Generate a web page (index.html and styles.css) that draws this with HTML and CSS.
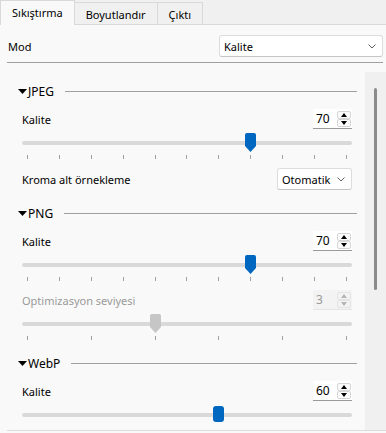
FILE: index.html
```html
<!DOCTYPE html>
<html lang="tr">
<head>
    <meta charset="UTF-8">
    <meta name="viewport" content="width=device-width, initial-scale=1.0">
    <title>Sıkıştırma</title>
    <link rel="stylesheet" href="styles.css">
</head>
<body>
    <div class="tabbar">
        <div class="tab active">Sıkıştırma</div>
        <div class="tab">Boyutlandır</div>
        <div class="tab">Çıktı</div>
    </div>

    <div class="page">
        <div class="mode-row">
            <span class="mode-label">Mod</span>
            <div class="combo combo-wide">
                <span>Kalite</span>
                <svg class="chevron" viewBox="0 0 8 5"><polyline points="0.5,0.5 4,4 7.5,0.5"/></svg>
            </div>
        </div>
        <div class="separator"></div>

        <div class="scroll">
            <div class="scroll-content">
                <!-- JPEG -->
                <section class="group">
                    <div class="group-head">
                        <svg class="caret" viewBox="0 0 9 5"><polygon points="0,0 9,0 4.5,5"/></svg>
                        <span>JPEG</span>
                        <div class="group-line"></div>
                    </div>
                    <div class="field">
                        <span>Kalite</span>
                        <div class="spin">
                            <span class="spin-value">70</span>
                            <div class="spin-buttons">
                                <div class="spin-btn"><svg viewBox="0 0 6 4"><polygon points="0,4 6,4 3,0"/></svg></div>
                                <div class="spin-btn"><svg viewBox="0 0 6 4"><polygon points="0,0 6,0 3,4"/></svg></div>
                            </div>
                        </div>
                    </div>
                    <div class="slider">
                        <div class="groove"></div>
                        <svg class="handle" style="left: calc((100% - 11px) * 0.7)" viewBox="0 0 11 19"><path d="M2 0H9A2 2 0 0 1 11 2V13L5.5 19L0 13V2A2 2 0 0 1 2 0Z"/></svg>
                        <div class="ticks"><i></i><i></i><i></i><i></i><i></i><i></i><i></i><i></i><i></i><i></i><i></i></div>
                    </div>
                    <div class="field field-combo">
                        <span>Kroma alt örnekleme</span>
                        <div class="combo combo-small">
                            <span>Otomatik</span>
                            <svg class="chevron" viewBox="0 0 8 5"><polyline points="0.5,0.5 4,4 7.5,0.5"/></svg>
                        </div>
                    </div>
                </section>

                <!-- PNG -->
                <section class="group">
                    <div class="group-head">
                        <svg class="caret" viewBox="0 0 9 5"><polygon points="0,0 9,0 4.5,5"/></svg>
                        <span>PNG</span>
                        <div class="group-line"></div>
                    </div>
                    <div class="field">
                        <span>Kalite</span>
                        <div class="spin">
                            <span class="spin-value">70</span>
                            <div class="spin-buttons">
                                <div class="spin-btn"><svg viewBox="0 0 6 4"><polygon points="0,4 6,4 3,0"/></svg></div>
                                <div class="spin-btn"><svg viewBox="0 0 6 4"><polygon points="0,0 6,0 3,4"/></svg></div>
                            </div>
                        </div>
                    </div>
                    <div class="slider">
                        <div class="groove"></div>
                        <svg class="handle" style="left: calc((100% - 11px) * 0.7)" viewBox="0 0 11 19"><path d="M2 0H9A2 2 0 0 1 11 2V13L5.5 19L0 13V2A2 2 0 0 1 2 0Z"/></svg>
                        <div class="ticks"><i></i><i></i><i></i><i></i><i></i><i></i><i></i><i></i><i></i><i></i><i></i></div>
                    </div>
                    <div class="field disabled">
                        <span>Optimizasyon seviyesi</span>
                        <div class="spin">
                            <span class="spin-value">3</span>
                            <div class="spin-buttons">
                                <div class="spin-btn"><svg viewBox="0 0 6 4"><polygon points="0,4 6,4 3,0"/></svg></div>
                                <div class="spin-btn"><svg viewBox="0 0 6 4"><polygon points="0,0 6,0 3,4"/></svg></div>
                            </div>
                        </div>
                    </div>
                    <div class="slider disabled">
                        <div class="groove"></div>
                        <svg class="handle" style="left: calc((100% - 11px) * 0.4)" viewBox="0 0 11 19"><path d="M2 0H9A2 2 0 0 1 11 2V13L5.5 19L0 13V2A2 2 0 0 1 2 0Z"/></svg>
                        <div class="ticks"><i></i><i></i><i></i><i></i><i></i><i></i></div>
                    </div>
                </section>

                <!-- WebP -->
                <section class="group">
                    <div class="group-head">
                        <svg class="caret" viewBox="0 0 9 5"><polygon points="0,0 9,0 4.5,5"/></svg>
                        <span>WebP</span>
                        <div class="group-line"></div>
                    </div>
                    <div class="field">
                        <span>Kalite</span>
                        <div class="spin">
                            <span class="spin-value">60</span>
                            <div class="spin-buttons">
                                <div class="spin-btn"><svg viewBox="0 0 6 4"><polygon points="0,4 6,4 3,0"/></svg></div>
                                <div class="spin-btn"><svg viewBox="0 0 6 4"><polygon points="0,0 6,0 3,4"/></svg></div>
                            </div>
                        </div>
                    </div>
                    <div class="slider">
                        <div class="groove"></div>
                        <svg class="handle round" style="left: calc((100% - 11px) * 0.6)" viewBox="0 0 11 16"><rect width="11" height="16" rx="3"/></svg>
                    </div>
                </section>
            </div>
            <div class="scrollbar"><div class="thumb"></div></div>
        </div>
    </div>
</body>
</html>
```

FILE: styles.css
```css
body {
    margin: 0;
    height: 433px;
    overflow: hidden;
    background-color: #f0f0f0;
    font-family: "Noto Sans", "Open Sans", sans-serif;
    font-size: 11px;
    color: #000;
}
.tabbar {
    display: flex;
    align-items: flex-end;
    height: 24px;
}
.tab {
    box-sizing: border-box;
    height: 22px;
    padding: 3px 11px 0 11px;
    margin-left: -1px;
    border: 1px solid #d9d9d9;
    border-bottom: none;
    background-color: #f0f0f0;
    line-height: 17px;
}
.tab.active {
    position: relative;
    z-index: 1;
    height: 25px;
    margin-left: 0;
    margin-bottom: -1px;
    padding-top: 3px;
    background-color: #f9f9f9;
}
.page {
    height: 408px;
    padding: 10px 0 0 7px;
    background-color: #f9f9f9;
    border-top: 1px solid #d9d9d9;
}
.mode-row {
    display: flex;
    align-items: center;
    justify-content: space-between;
    height: 22px;
}
.mode-label {
    padding-left: 1px;
}
.combo {
    box-sizing: border-box;
    display: flex;
    align-items: center;
    justify-content: space-between;
    height: 22px;
    padding: 0 6px 0 4px;
    background-color: #fff;
    border: 1px solid #dcdcdc;
    border-bottom-color: #c4c4c4;
    border-radius: 3px;
}
.combo-wide {
    width: 164px;
    margin-right: 3px;
}
.combo-small {
    width: 75px;
}
.chevron {
    width: 8px;
    height: 5px;
    fill: none;
    stroke: #606060;
    stroke-width: 1;
}
.separator {
    height: 1px;
    margin: 5px 3px 0 0;
    background-color: #a0a0a0;
}
.scroll {
    display: flex;
    height: 358px;
    margin-top: 9px;
    border-bottom: 1px solid #dcdcdc;
    overflow: hidden;
}
.scroll-content {
    flex: 1;
    padding: 10px 13px 0 15px;
}
.scrollbar {
    width: 21px;
    background-color: #f0f0f0;
}
.thumb {
    width: 3px;
    height: 202px;
    margin: 16px auto 0 auto;
    border-radius: 2px;
    background-color: #8b8b8b;
}
.group + .group {
    margin-top: 14px;
}
.group-head {
    display: flex;
    align-items: center;
    height: 18px;
    margin: 0 -5px 0 -4px;
    font-size: 12px;
}
.caret {
    width: 9px;
    height: 5px;
    margin-right: 1px;
    fill: #000;
}
.group-line {
    flex: 1;
    height: 1px;
    margin-left: 11px;
    background-color: #a0a0a0;
}
.field {
    display: flex;
    align-items: center;
    justify-content: space-between;
    height: 20px;
    margin-top: 9px;
}
.field-combo {
    height: 22px;
}
.field.disabled {
    color: #9a9a9a;
}
.spin {
    box-sizing: border-box;
    display: flex;
    align-items: center;
    justify-content: space-between;
    width: 39px;
    height: 20px;
    padding: 0 1px 0 3px;
    background-color: #fff;
    border-bottom: 1px solid #9a9a9a;
    font-size: 12px;
}
.spin-buttons {
    display: flex;
    flex-direction: column;
    width: 14px;
    height: 16px;
}
.spin-btn {
    flex: 1;
    display: flex;
    align-items: center;
    justify-content: center;
    border: 1px solid #d5d5d5;
    border-radius: 2px;
    background-color: #fbfbfb;
}
.spin-btn svg {
    width: 6px;
    height: 4px;
    fill: #000;
}
.disabled .spin {
    background-color: #f3f3f3;
    border-bottom-color: #e6e6e6;
}
.disabled .spin-btn {
    border-color: #e4e4e4;
    background-color: #f3f3f3;
}
.disabled .spin-btn svg {
    fill: #b5b5b5;
}
.slider {
    position: relative;
    height: 18px;
    padding-top: 12px;
}
.slider:last-child {
    margin-bottom: 2px;
}
.groove {
    height: 4px;
    border-radius: 2px;
    background-color: #d9d9d9;
}
.handle {
    position: absolute;
    top: 4px;
    width: 11px;
    height: 19px;
    fill: #0067c0;
}
.handle.round {
    height: 16px;
    top: 5px;
}
.slider.disabled .handle {
    fill: #c6c6c6;
}
.ticks {
    display: flex;
    justify-content: space-between;
    height: 4px;
    margin-top: 10px;
    padding: 0 5px;
}
.ticks i {
    width: 1px;
    background-color: #a0a0a0;
}
```
